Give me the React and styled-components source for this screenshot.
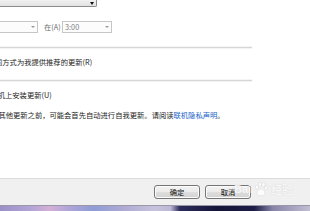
import React from "react";
import styled, { createGlobalStyle } from "styled-components";

const Global = createGlobalStyle`
  html, body { margin: 0; padding: 0; background: #fff; }
  body {
    width: 310px; height: 211px; overflow: hidden;
    font-family: "Noto Sans CJK SC", "Noto Sans", sans-serif;
  }
  #root { width: 310px; height: 211px; }
`;

const Window = styled.div`
  position: relative;
  width: 310px;
  height: 211px;
  display: flex;
  flex-direction: column;
  overflow: hidden;
  background: #fff;
`;

const Body = styled.div`
  flex: 1;
  display: flex;
  flex-direction: column;
  font-size: 7.3px;
  line-height: 10px;
  color: #1c1c1c;
  overflow: hidden;
`;

const Arrow = styled.span`
  width: 0;
  height: 0;
  border-left: ${(p) => p.$w / 2}px solid transparent;
  border-right: ${(p) => p.$w / 2}px solid transparent;
  border-top: ${(p) => p.$h}px solid ${(p) => p.$color};
`;

const TopCombo = styled.div`
  box-sizing: border-box;
  width: 97px;
  height: 7px;
  border: 1px solid #8c8c8c;
  border-top: none;
  border-left: none;
  border-radius: 0 0 2px 0;
  background: linear-gradient(#f1f1f1, #e2e2e2);
  display: flex;
  justify-content: flex-end;
  align-items: flex-start;
  padding: 2px 2px 0 0;
`;

const Row = styled.div`
  display: flex;
  align-items: center;
  height: 12px;
  margin-top: 14px;
`;

const Combo = styled.div`
  box-sizing: border-box;
  width: ${(p) => p.$width}px;
  height: 12px;
  border: 1px solid #c6c6c6;
  ${(p) => (p.$cut ? "border-left: none;" : "")}
  background: #fcfcfc;
  display: flex;
  align-items: center;
  justify-content: ${(p) => (p.$cut ? "flex-end" : "space-between")};
  padding: 0 2px 0 2px;
  color: #7d7d7d;
  font-size: 7.3px;
`;

const Label = styled.span`
  width: 18px;
  margin-left: 6px;
  color: #6e6e6e;
  white-space: nowrap;
`;

const Separator = styled.div`
  width: 252px;
  height: 1px;
  flex: none;
  margin-top: ${(p) => p.$top}px;
  background: #d6d6d6;
  box-shadow: 0 1px 0 #f3f3f3, 0 -1px 0 #f5f5f5;
`;

const Line = styled.div`
  white-space: nowrap;
  margin-top: ${(p) => p.$top}px;
  margin-left: ${(p) => p.$shift}px;
`;

const Link = styled.span`
  color: #1a66c8;
`;

const Footer = styled.div`
  box-sizing: border-box;
  height: 27px;
  flex: none;
  border-top: 1px solid #dcdcdc;
  background: #f0f0f0;
  display: flex;
  justify-content: flex-end;
  align-items: center;
  gap: 5px;
  padding-right: 59px;
`;

const Button = styled.button`
  box-sizing: border-box;
  width: 46px;
  height: 14px;
  padding: 0;
  border: 1px solid #767676;
  border-radius: 3px;
  background: linear-gradient(#f3f3f3 0%, #ebebeb 48%, #dedede 52%, #d2d2d2 100%);
  box-shadow: inset 0 0 0 1px #fbfbfb;
  font-family: "Noto Sans CJK SC", "Noto Sans", sans-serif;
  font-size: 7.3px;
  line-height: 12px;
  color: #111;
`;

const Taskbar = styled.div`
  height: 5px;
  flex: none;
  border-top: 1px solid #9a98a8;
  background: linear-gradient(
    90deg,
    #9a90c8 0%,
    #b3a4d6 10%,
    #d4afd6 16%,
    #b0a6d8 22%,
    #8f9cd6 30%,
    #aeaad4 40%,
    #c7c3dc 50%,
    #bdb8d6 55%,
    #2c2c5c 58%,
    #141438 70%,
    #1c1c46 82%,
    #8884a8 88%,
    #c2bed2 100%
  );
`;

const Watermark = styled.div`
  position: absolute;
  left: 234px;
  top: 181px;
  display: flex;
  align-items: center;
  gap: 2px;
  font-family: "Liberation Sans", "Noto Sans CJK SC", sans-serif;
  font-size: 11px;
  font-weight: bold;
  color: rgba(255, 255, 255, 0.85);
  text-shadow: 0 0 1px rgba(120, 120, 120, 0.3);
  pointer-events: none;
`;

const Paw = () => (
  <svg width="16" height="15" viewBox="0 0 16 15">
    <g fill="rgba(255,255,255,0.85)" stroke="rgba(150,150,150,0.25)" strokeWidth="0.6">
      <ellipse cx="4" cy="5" rx="1.6" ry="2" />
      <ellipse cx="7" cy="2.5" rx="1.6" ry="2" />
      <ellipse cx="10.5" cy="2.8" rx="1.6" ry="2" />
      <ellipse cx="13" cy="5.8" rx="1.5" ry="1.9" />
      <path d="M8 7 C11 7 13 11 11.5 12.8 C10 14 6 14 4.5 12.8 C3 11 5 7 8 7 Z" />
    </g>
  </svg>
);

export default function App() {
  return (
    <Window>
      <Global />
      <Body>
        <TopCombo>
          <Arrow $w={5} $h={3} $color="#111" />
        </TopCombo>
        <Row>
          <Combo $width={38} $cut>
            <Arrow $w={4} $h={2} $color="#9a9a9a" />
          </Combo>
          <Label>在(A)</Label>
          <Combo $width={50}>
            <span>3:00</span>
            <Arrow $w={4} $h={2} $color="#9a9a9a" />
          </Combo>
        </Row>
        <Separator $top={14} />
        <Line $top={9} $shift={-5}>同方式为我提供推荐的更新(R)</Line>
        <Separator $top={13} />
        <Line $top={9} $shift={-2.3}>机上安装更新(U)</Line>
        <Line $top={10} $shift={-1.6}>
          其他更新之前，可能会首先自动进行自我更新。请阅读<Link>联机隐私声明</Link>。
        </Line>
      </Body>
      <Footer>
        <Button>确定</Button>
        <Button>取消</Button>
      </Footer>
      <Taskbar />
      <Watermark>
        <span>Bai</span>
        <Paw />
        <span>经验</span>
      </Watermark>
    </Window>
  );
}
